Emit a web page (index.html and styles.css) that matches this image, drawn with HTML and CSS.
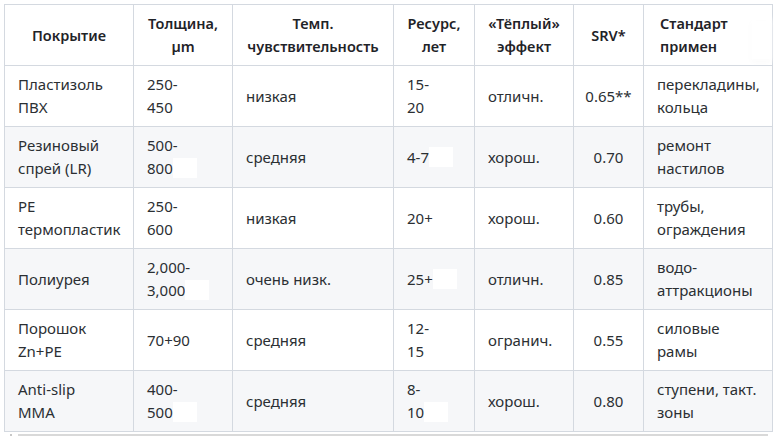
FILE: index.html
```html
<!DOCTYPE html>
<html lang="ru">
<head>
<meta charset="utf-8">
<link rel="stylesheet" href="styles.css">
</head>
<body>
<div class="wrap">
<table class="tbl">
<colgroup>
<col class="c1"><col class="c2"><col class="c3"><col class="c4"><col class="c5"><col class="c6"><col class="c7">
</colgroup>
<thead>
<tr>
<th>Покрытие</th>
<th>Толщина,<br>µm</th>
<th>Темп.<br>чувствительность</th>
<th>Ресурс,<br>лет</th>
<th>«Тёплый»<br>эффект</th>
<th>SRV*</th>
<th class="last">Стандарт<br>примен<span class="fade"></span></th>
</tr>
</thead>
<tbody>
<tr>
<td>Пластизоль<br>ПВХ</td>
<td>250-<br>450</td>
<td>низкая</td>
<td>15-<br>20</td>
<td>отличн.</td>
<td class="num">0.65**</td>
<td>перекладины,<br>кольца</td>
</tr>
<tr class="alt">
<td>Резиновый<br>спрей (LR)</td>
<td>500-<br>800<span class="blank"></span></td>
<td>средняя</td>
<td>4-7<span class="blank"></span></td>
<td>хорош.</td>
<td class="num">0.70</td>
<td>ремонт<br>настилов</td>
</tr>
<tr>
<td>PE<br>термопластик</td>
<td>250-<br>600</td>
<td>низкая</td>
<td>20+</td>
<td>хорош.</td>
<td class="num">0.60</td>
<td>трубы,<br>ограждения</td>
</tr>
<tr class="alt">
<td>Полиурея</td>
<td>2,000-<br>3,000<span class="blank"></span></td>
<td>очень низк.</td>
<td>25+<span class="blank"></span></td>
<td>отличн.</td>
<td class="num">0.85</td>
<td>водо-<br>аттракционы</td>
</tr>
<tr>
<td>Порошок<br>Zn+PE</td>
<td>70+90</td>
<td>средняя</td>
<td>12-<br>15</td>
<td>огранич.</td>
<td class="num">0.55</td>
<td>силовые<br>рамы</td>
</tr>
<tr class="alt">
<td>Anti-slip<br>MMA</td>
<td>400-<br>500<span class="blank"></span></td>
<td>средняя</td>
<td>8-<br>10<span class="blank"></span></td>
<td>хорош.</td>
<td class="num">0.80</td>
<td>ступени, такт.<br>зоны</td>
</tr>
</tbody>
</table>
<div class="scroll"><span class="arrow"></span><span class="thumb"></span></div>
</div>
</body>
</html>
```
FILE: styles.css
```css
html, body {
  margin: 0;
  padding: 0;
  background: #ffffff;
}
.wrap {
  padding: 4px 4px 0 4px;
  font-family: "Noto Sans", "Open Sans", sans-serif;
}
.tbl {
  border-collapse: collapse;
  table-layout: fixed;
  width: 768px;
  font-size: 15px;
  line-height: 23px;
  color: #2b2f33;
}
.c1 { width: 129px; }
.c2 { width: 99px; }
.c3 { width: 161px; }
.c4 { width: 81px; }
.c5 { width: 99px; }
.c6 { width: 70px; }
.c7 { width: 129px; }
.tbl th, .tbl td {
  border: 1px solid #d4d9e0;
  padding: 7px 13px;
  height: 46px;
  vertical-align: middle;
  white-space: nowrap;
}
.tbl th {
  font-size: 14.5px;
  font-weight: 600;
  text-align: center;
  color: #1f2328;
  background: #ffffff;
}
.tbl th.last {
  text-align: left;
  padding-left: 16px;
  position: relative;
}
.fade {
  position: absolute;
  right: 2px;
  top: 16px;
  width: 18px;
  height: 38px;
  background: #ffffff;
  box-shadow: 0 0 5px 2px rgba(255, 255, 255, 0.9), 0 2px 6px rgba(0, 0, 0, 0.04);
}
.tbl td {
  text-align: left;
}
.tbl td.num {
  text-align: center;
  padding-left: 4px;
  padding-right: 4px;
}
.alt td {
  background: #f6f7f9;
}
.blank {
  display: inline-block;
  width: 24px;
  height: 20px;
  background: #ffffff;
  vertical-align: -4px;
}
.scroll {
  display: flex;
  align-items: center;
  height: 5px;
}
.arrow {
  width: 2px;
  height: 2px;
  background: #c8c8c8;
  margin-left: 6px;
}
.thumb {
  flex: 1;
  height: 2px;
  background: #d9d9d9;
  margin-left: 6px;
  margin-right: 4px;
}
```
